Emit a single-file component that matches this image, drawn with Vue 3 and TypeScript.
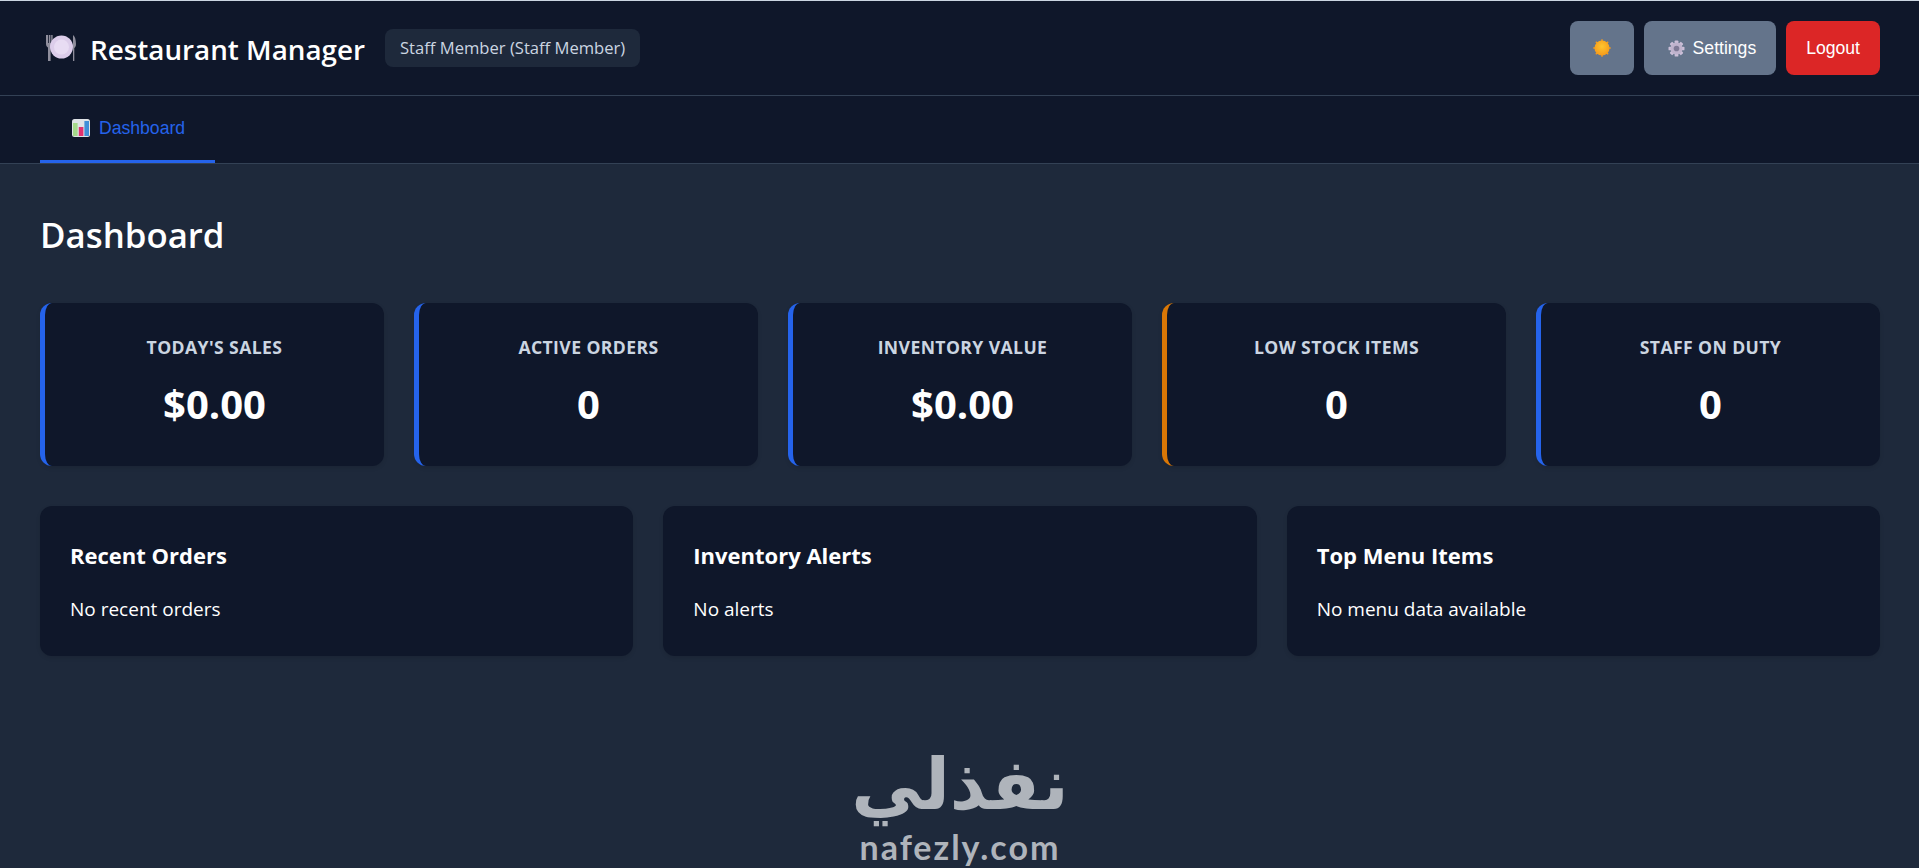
<template>
  <div class="app">
    <header class="header">
      <div class="header_left">
        <h1 class="header_title">
          <svg class="header_icon" viewBox="0 0 32 32" aria-hidden="true">
            <path d="M1 3v9c0 2 1 3 2 3.500V29h2.600V15.500c1-.5 2-1.500 2-3.500V3H6.200v8H5.400V3H3.800v8H3V3z" fill="#8f8e9c" />
            <path d="M28 3c1.700 1 3 4 3 9 0 2-.8 3.500-1.700 4V29H28z" fill="#8f8e9c" />
            <circle cx="16.500" cy="15" r="11.500" fill="#dccdea" />
            <circle cx="16.500" cy="15" r="7.500" fill="#e8dcf3" />
          </svg>
          <span>Restaurant Manager</span>
        </h1>
        <div class="header_user">{{ userName }}</div>
      </div>
      <div class="header_actions">
        <button class="btn btn-gray btn-theme" type="button">
          <svg class="btn_icon" viewBox="0 0 20 20" aria-hidden="true">
            <defs>
              <radialGradient id="sunFill" cx="50%" cy="40%" r="60%">
                <stop offset="0" stop-color="#ffc52e" />
                <stop offset="1" stop-color="#f59a1b" />
              </radialGradient>
            </defs>
            <g fill="#f59a1b">
              <rect v-for="angle in sunRays" :key="angle" x="9.200" y="0.300" width="1.600" height="3" :transform="`rotate(${angle} 10 10)`" />
            </g>
            <circle cx="10" cy="10" r="8.400" fill="url(#sunFill)" />
          </svg>
        </button>
        <button class="btn btn-gray btn-settings" type="button">
          <svg class="btn_icon" viewBox="0 0 20 20" aria-hidden="true">
            <g fill="#cbbfd8">
              <rect v-for="angle in gearTeeth" :key="angle" x="7.800" y="0.600" width="4.400" height="5" rx="1" :transform="`rotate(${angle} 10 10)`" />
            </g>
            <circle cx="10" cy="10" r="7" fill="#bfb3cd" />
            <circle cx="10" cy="10" r="3.300" fill="#7f7a96" />
          </svg>
          <span>Settings</span>
        </button>
        <button class="btn btn-red" type="button">Logout</button>
      </div>
    </header>

    <nav class="tabs">
      <button class="tab tab-active" type="button">
        <svg class="tab_icon" viewBox="0 0 18 18" aria-hidden="true">
          <rect width="18" height="18" rx="2.500" fill="#dfe3e6" />
          <rect x="1" y="4" width="4.600" height="13" fill="#a5d98a" />
          <rect x="6.800" y="8" width="4.600" height="9" fill="#e0316f" />
          <rect x="12.400" y="2" width="4.600" height="15" fill="#3f8fd8" />
        </svg>
        <span>Dashboard</span>
      </button>
    </nav>

    <main class="content">
      <h2 class="content_title">Dashboard</h2>

      <section class="stats">
        <div
          v-for="stat in stats"
          :key="stat.label"
          class="stat"
          :class="{ 'stat-warning': stat.warning }"
        >
          <div class="stat_label">{{ stat.label }}</div>
          <div class="stat_value">{{ stat.value }}</div>
        </div>
      </section>

      <section class="panels">
        <div v-for="panel in panels" :key="panel.title" class="panel">
          <h3 class="panel_title">{{ panel.title }}</h3>
          <p class="panel_text">{{ panel.text }}</p>
        </div>
      </section>

      <div class="watermark">
        <div class="watermark_ar" lang="ar" dir="rtl">نفذلي</div>
        <div class="watermark_en">nafezly.com</div>
      </div>
    </main>
  </div>
</template>

<script setup lang="ts">
interface Stat {
  label: string;
  value: string;
  warning?: boolean;
}

interface Panel {
  title: string;
  text: string;
}

const userName = 'Staff Member (Staff Member)';

const sunRays = [0, 45, 90, 135, 180, 225, 270, 315];
const gearTeeth = [0, 45, 90, 135, 180, 225, 270, 315];

const stats: Stat[] = [
  { label: "Today's Sales", value: '$0.00' },
  { label: 'Active Orders', value: '0' },
  { label: 'Inventory Value', value: '$0.00' },
  { label: 'Low Stock Items', value: '0', warning: true },
  { label: 'Staff on Duty', value: '0' },
];

const panels: Panel[] = [
  { title: 'Recent Orders', text: 'No recent orders' },
  { title: 'Inventory Alerts', text: 'No alerts' },
  { title: 'Top Menu Items', text: 'No menu data available' },
];
</script>

<style>
html,
body {
  margin: 0;
  height: 100%;
  background: #1e293b;
  overflow: hidden;
}
</style>

<style scoped>
.app {
  height: 868px;
  overflow: hidden;
  font-family: 'Open Sans', 'Noto Sans', sans-serif;
  color: #fff;
  background: #1e293b;
  border-top: 1px solid #cbd5e1;
  box-sizing: border-box;
}

.header {
  height: 95px;
  box-sizing: border-box;
  padding: 20px 39px 0 40px;
  display: flex;
  justify-content: space-between;
  align-items: flex-start;
  background: #0f172a;
  border-bottom: 1px solid #334155;
}

.header_left {
  display: flex;
  align-items: center;
  gap: 20px;
  height: 54px;
}

.header_title {
  margin: 0;
  display: flex;
  align-items: center;
  gap: 13px;
  font-size: 27.8px;
  line-height: 40px;
  font-weight: 600;
}

.header_title span {
  padding-top: 2px;
}

.header_icon {
  width: 32px;
  height: 32px;
  margin: 0 0 0 5px;
}

.header_user {
  padding: 8px 15px;
  font-size: 16.6px;
  line-height: 22px;
  color: #cbd5e1;
  background: #1e293b;
  border-radius: 8px;
}

.header_actions {
  display: flex;
  gap: 10px;
}

.btn {
  height: 54px;
  padding: 0 20px;
  display: flex;
  align-items: center;
  gap: 8px;
  border: 0;
  border-radius: 8px;
  color: #fff;
  font-family: 'Liberation Sans', Arial, sans-serif;
  font-size: 17.6px;
  cursor: pointer;
}

.btn-gray {
  background: #64748b;
}

.btn-theme {
  width: 64px;
  padding: 0;
  justify-content: center;
}

.btn-settings {
  padding: 0 20px 0 24px;
}

.btn-red {
  background: #dc2626;
}

.btn_icon {
  width: 18px;
  height: 18px;
}

.btn-settings .btn_icon {
  width: 17px;
  height: 17px;
}

.tabs {
  height: 68px;
  padding: 0 40px;
  display: flex;
  background: #0f172a;
  border-bottom: 1px solid #334155;
  box-sizing: border-box;
}

.tab {
  width: 175px;
  height: 67px;
  padding: 0 0 0 32px;
  display: flex;
  align-items: center;
  gap: 9px;
  background: none;
  border: 0;
  border-bottom: 3px solid transparent;
  font-family: 'Liberation Sans', Arial, sans-serif;
  font-size: 17.6px;
  color: #94a3b8;
  cursor: pointer;
}

.tab-active {
  color: #2563eb;
  border-bottom-color: #2563eb;
}

.tab_icon {
  width: 18px;
  height: 18px;
}

.content {
  padding: 46px 39px 0 40px;
}

.content_title {
  margin: 0 0 44px;
  font-size: 34.8px;
  line-height: 49px;
  font-weight: 600;
}

.stats {
  display: grid;
  grid-template-columns: repeat(5, 1fr);
  gap: 30px;
}

.stat {
  height: 163px;
  box-sizing: border-box;
  padding: 32px 20px 0;
  text-align: center;
  background: #0f172a;
  border-left: 5px solid #2563eb;
  border-radius: 12px;
  box-shadow: 0 2px 4px rgba(0, 0, 0, 0.1);
}

.stat-warning {
  border-left-color: #d97706;
}

.stat_label {
  font-size: 17.6px;
  line-height: 24px;
  font-weight: 700;
  letter-spacing: 0.4px;
  text-transform: uppercase;
  color: #cbd5e1;
}

.stat_value {
  margin-top: 18px;
  font-size: 40px;
  line-height: 54px;
  font-weight: 700;
}

.panels {
  margin-top: 40px;
  display: grid;
  grid-template-columns: repeat(3, 1fr);
  gap: 30px;
}

.panel {
  height: 150px;
  box-sizing: border-box;
  padding: 34px 30px 0;
  background: #0f172a;
  border-radius: 12px;
  box-shadow: 0 2px 4px rgba(0, 0, 0, 0.1);
}

.panel_title {
  margin: 0 0 26px;
  font-size: 22px;
  line-height: 30px;
  font-weight: 700;
}

.panel_text {
  margin: 0;
  font-size: 19px;
  line-height: 26px;
}

.watermark {
  margin-top: 89px;
  text-align: center;
  color: #afb4bb;
}

.watermark_ar {
  font-family: 'DejaVu Sans', sans-serif;
  font-size: 71px;
  line-height: 80px;
  font-weight: 700;
}

.watermark_en {
  margin-top: 2px;
  font-family: Lato, sans-serif;
  font-size: 34px;
  line-height: 40px;
  font-weight: 700;
  letter-spacing: 2px;
}
</style>
